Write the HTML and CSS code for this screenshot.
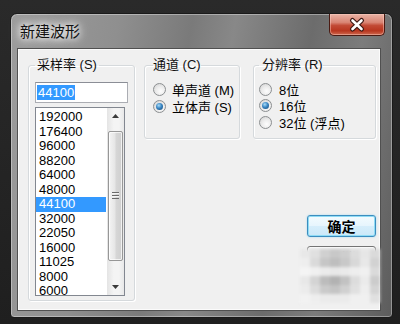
FILE: index.html
```html
<!DOCTYPE html>
<html lang="zh-CN">
<head>
<meta charset="utf-8">
<title>新建波形</title>
<link rel="stylesheet" href="styles.css">
</head>
<body>
<div class="window">
  <div class="titlebar">
    <span class="title">新建波形</span>
    <button class="close" aria-label="关闭">
      <svg width="56" height="22" viewBox="0 0 56 22">
        <path d="M23.5 7.5 L32.5 16 M32.5 7.5 L23.5 16" stroke="#3b1712" stroke-width="5" stroke-linecap="round"/>
        <path d="M23.5 7.5 L32.5 16 M32.5 7.5 L23.5 16" stroke="#ffffff" stroke-width="2.6" stroke-linecap="round"/>
      </svg>
    </button>
  </div>
  <div class="client">
    <fieldset class="group rate">
      <legend>采样率 (S)</legend>
      <div class="edit"><span class="sel">44100</span></div>
      <div class="list">
        <ul class="items">
          <li>192000</li>
          <li>176400</li>
          <li>96000</li>
          <li>88200</li>
          <li>64000</li>
          <li>48000</li>
          <li class="selected">44100</li>
          <li>32000</li>
          <li>22050</li>
          <li>16000</li>
          <li>11025</li>
          <li>8000</li>
          <li>6000</li>
        </ul>
        <div class="vscroll">
          <div class="sb-btn"><svg width="7" height="4" viewBox="0 0 7 4"><path d="M0 4 L3.5 0 L7 4 Z" fill="#3a3a3a"/></svg></div>
          <div class="sb-track"><div class="thumb"><span class="grip"></span></div></div>
          <div class="sb-btn"><svg width="7" height="4" viewBox="0 0 7 4"><path d="M0 0 L3.5 4 L7 0 Z" fill="#3a3a3a"/></svg></div>
        </div>
      </div>
    </fieldset>
    <div class="side">
      <div class="groups">
        <fieldset class="group chan">
          <legend>通道 (C)</legend>
          <label class="opt"><span class="radio"></span>单声道 (M)</label>
          <label class="opt"><span class="radio on"></span>立体声 (S)</label>
        </fieldset>
        <fieldset class="group res">
          <legend>分辨率 (R)</legend>
          <label class="opt"><span class="radio"></span>8位</label>
          <label class="opt"><span class="radio on"></span>16位</label>
          <label class="opt"><span class="radio"></span>32位 (浮点)</label>
        </fieldset>
      </div>
      <div class="buttons">
        <button class="btn default">确定</button>
        <button class="btn">取消</button>
      </div>
    </div>
    <div class="mosaic">
      <i style="background:#e8e8e8"></i><i style="background:#e0e0e0"></i><i style="background:#d0d0d0"></i><i style="background:#c8c8c8"></i><i style="background:#cecece"></i><i style="background:#dcdcdc"></i><i style="background:#e6e6e6"></i><i style="background:#dadada"></i>
      <i style="background:#eeeeee"></i><i style="background:#dadada"></i><i style="background:#c6c6c6"></i><i style="background:#bebebe"></i><i style="background:#c8c8c8"></i><i style="background:#d8d8d8"></i><i style="background:#e8e8e8"></i><i style="background:#d2d2d2"></i>
      <i style="background:#f4f4f4"></i><i style="background:#f0f0f0"></i><i style="background:#ebebeb"></i><i style="background:#e8e8e8"></i><i style="background:#eaeaea"></i><i style="background:#eeeeee"></i><i style="background:#f0f0f0"></i><i style="background:#dadada"></i>
      <i style="background:#e8e8e8"></i><i style="background:#d4d4d4"></i><i style="background:#bcbcbc"></i><i style="background:#b2b2b2"></i><i style="background:#c2c2c2"></i><i style="background:#dcdcdc"></i><i style="background:#ebebeb"></i><i style="background:#cccccc"></i>
      <i style="background:#ececec"></i><i style="background:#dcdcdc"></i><i style="background:#cacaca"></i><i style="background:#c4c4c4"></i><i style="background:#d0d0d0"></i><i style="background:#e0e0e0"></i><i style="background:#eeeeee"></i><i style="background:#d4d4d4"></i>
      <i style="background:#f2f2f2"></i><i style="background:#eeeeee"></i><i style="background:#ebebeb"></i><i style="background:#eaeaea"></i><i style="background:#ebebeb"></i><i style="background:#f0f0f0"></i><i style="background:#f0f0f0"></i><i style="background:#e0e0e0"></i>
    </div>
  </div>
</div>
</body>
</html>
```
FILE: styles.css
```css
* { box-sizing: border-box; }

html, body {
  margin: 0;
  width: 400px;
  height: 324px;
  overflow: hidden;
}

body {
  background: linear-gradient(180deg, #2a2a2a 0%, #1f1f1f 100%);
  font-family: "Liberation Sans", "Noto Sans CJK SC", sans-serif;
  font-size: 12px;
  color: #000;
}

.window {
  margin: 13px 0 0 10px;
  width: 383px;
  height: 305px;
  display: flex;
  flex-direction: column;
  border: 1px solid #1a1a1a;
  border-radius: 7px 7px 4px 4px;
  background: linear-gradient(100deg, #9c9c9c 0%, #8f8f8f 25%, #7a7a7a 42%, #888888 52%, #6c6c6c 70%, #7c7c7c 82%, #5c5c5c 100%);
  box-shadow: inset 0 0 0 1px rgba(255, 255, 255, 0.35);
}

.titlebar {
  height: 34px;
  display: flex;
  align-items: flex-start;
  flex-shrink: 0;
}

.title {
  margin: 9px 0 0 9px;
  font-family: "Noto Sans CJK SC", sans-serif;
  font-size: 15px;
  line-height: 16px;
  color: #111;
  text-shadow: 0 0 6px #fff, 0 0 10px rgba(255, 255, 255, 0.9), 0 0 14px rgba(255, 255, 255, 0.7);
}

.close {
  margin: 0 7px 0 auto;
  width: 56px;
  height: 22px;
  padding: 0;
  border: 1px solid #4a1a12;
  border-top: none;
  border-radius: 0 0 5px 5px;
  background: linear-gradient(180deg, #e9b3a6 0%, #d98574 40%, #c24a35 55%, #b8361f 80%, #cf6a50 100%);
  box-shadow: inset 0 0 0 1px rgba(255, 210, 200, 0.45);
  display: block;
}

.close svg { display: block; margin: -1px 0 0 -1px; }

.client {
  position: relative;
  margin: 0 11px 0 6px;
  height: 263px;
  display: flex;
  align-items: flex-start;
  padding: 8px 0 0 10px;
  background: #f0f0f0;
  border: 1px solid #505050;
  box-shadow: inset 0 0 0 1px #fbfbfb;
}

.group {
  margin: 0;
  min-width: 0;
  border: 1px solid #d5d9dc;
  border-radius: 3px;
  box-shadow: inset 1px 1px 0 #fff, 1px 1px 0 #fff;
}

.group legend {
  font-family: "Liberation Sans", "Noto Sans CJK SC", sans-serif;
  font-size: 13px;
  line-height: 16px;
  padding: 0 2px;
  color: #111;
  white-space: pre;
}

.rate {
  width: 107px;
  padding: 9px 6px 4px 6px;
}

.edit {
  width: 93px;
  height: 21px;
  background: #fff;
  border: 1px solid #abadb3;
  border-top-color: #8b8e96;
  padding: 2px 0 0 1px;
  font-size: 13px;
}

.sel {
  display: inline-block;
  background: #3399ff;
  color: #fff;
  line-height: 15px;
  padding: 0 1px;
}

.list {
  margin-top: 4px;
  width: 90px;
  height: 189px;
  border: 1px solid #828790;
  background: #fff;
  display: flex;
  overflow: hidden;
}

.items {
  list-style: none;
  margin: 0;
  padding: 2px 0 0 0;
  flex: 1;
  font-size: 13px;
  line-height: 14.5px;
}

.items li { padding-left: 3px; margin-right: 1px; }

.items li.selected {
  background: #3399ff;
  color: #fff;
}

.vscroll {
  width: 17px;
  display: flex;
  flex-direction: column;
  background: linear-gradient(90deg, #e4e4e4, #f4f4f4 40%, #f4f4f4 70%, #e8e8e8);
}

.sb-btn {
  height: 17px;
  display: flex;
  align-items: center;
  justify-content: center;
}

.sb-track {
  flex: 1;
  padding: 6px 0 18px 0;
}

.thumb {
  margin: 0 1px;
  height: 130px;
  border: 1px solid #979797;
  border-radius: 2px;
  background: linear-gradient(90deg, #f4f4f4, #e6e6e6 45%, #d6d6d6 55%, #cfcfcf);
  box-shadow: inset 0 0 0 1px rgba(255, 255, 255, 0.7);
  display: flex;
  align-items: center;
  justify-content: center;
}

.grip {
  width: 7px;
  height: 7px;
  background: repeating-linear-gradient(180deg, #6a6a6a 0 1px, #f4f4f4 1px 2px, transparent 2px 3px);
}

.side {
  margin-left: 9px;
  display: flex;
  flex-direction: column;
}

.groups {
  display: flex;
  gap: 13px;
}

.chan {
  width: 96px;
  height: 82px;
  padding: 8px 2px 0 8px;
}

.chan legend { padding: 0; }

.res {
  width: 123px;
  height: 82px;
  padding: 8px 2px 0 5px;
}

.res legend { padding: 0 0 0 3px; }

.opt {
  display: flex;
  align-items: center;
  gap: 6px;
  height: 17px;
  font-family: "Liberation Sans", "Noto Sans CJK SC", sans-serif;
  font-size: 13px;
  white-space: pre;
}

.res .opt { height: 16.5px; gap: 7px; }

.radio {
  position: relative;
  width: 13px;
  height: 13px;
  flex-shrink: 0;
  border-radius: 50%;
  border: 1px solid #8c8f91;
  background: radial-gradient(circle at 60% 65%, #fdfdfd 0%, #ececec 45%, #cfcfcf 100%);
}

.radio.on::after {
  content: "";
  position: absolute;
  left: 2px;
  top: 2px;
  width: 7px;
  height: 7px;
  border-radius: 50%;
  background: radial-gradient(circle at 40% 35%, #a8dcf8 0%, #3b87c4 45%, #10416e 100%);
}

.buttons {
  margin-top: 76px;
  display: flex;
  flex-direction: column;
  align-items: flex-end;
  gap: 9px;
}

.btn {
  width: 69px;
  height: 22px;
  padding: 0;
  border: 1px solid #707070;
  border-radius: 3px;
  background: linear-gradient(180deg, #f2f2f2 0%, #ebebeb 50%, #dddddd 51%, #cfcfcf 100%);
  box-shadow: inset 0 0 0 1px rgba(255, 255, 255, 0.8);
  font-family: "Noto Sans CJK SC", sans-serif;
  font-size: 14px;
  line-height: 20px;
  color: #000;
}

.btn.default {
  border-color: #3c8dbf;
  background: linear-gradient(180deg, #f4fbfe 0%, #e6f5fd 50%, #d6eefb 51%, #cbe8f8 100%);
  box-shadow: inset 0 0 0 1px #8fdcf5, 0 0 2px #9ad8f0;
  font-weight: bold;
}

.mosaic {
  position: absolute;
  left: 282px;
  top: 200px;
  width: 80px;
  display: grid;
  grid-template-columns: repeat(8, 10px);
  grid-auto-rows: 9px;
  filter: blur(1.5px);
}

.mosaic i { display: block; }
```
